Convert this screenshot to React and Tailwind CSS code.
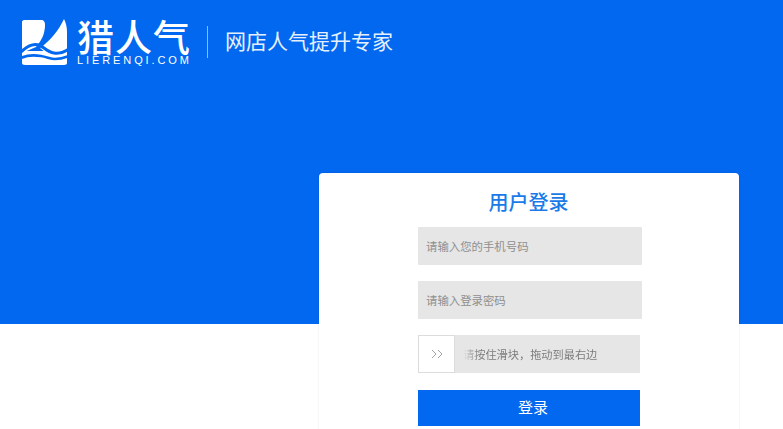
import { useState } from 'react';

const cjk = { fontFamily: '"Noto Sans CJK SC", "Liberation Sans", sans-serif' };

function LogoMark() {
  return (
    <svg width="46" height="47" viewBox="0 0 46 47" fill="#fff" aria-hidden className="shrink-0">
      <path d="M2 1H19C22 1 23 3 23 6C23 14 20 21 14 28L0 34V3C0 2 1 1 2 1Z" />
      <path d="M42 0C44 4 45 8 45 13V34H24L18 29C28 22 37 11 42 0Z" />
      <path d="M0 32H45V44C45 45 44 46 42 46H3C1 46 0 45 0 44Z" />
      <path d="M-1 33C5 27 11 24 17 26C22 28 25 33 32 34C37 35 41 34 47 30" fill="none" stroke="#0268f0" strokeWidth="3" />
      <path d="M-1 39C5 36 13 36 19 37C25 38 29 40 33 40C38 40 42 39 47 37" fill="none" stroke="#0268f0" strokeWidth="2.6" />
    </svg>
  );
}

function Field({ placeholder, type = 'text' }) {
  const [value, setValue] = useState('');
  return (
    <input
      type={type}
      value={value}
      onChange={(e) => setValue(e.target.value)}
      placeholder={placeholder}
      className="h-[38px] w-[224px] rounded-[1px] bg-[#e6e6e6] px-[8px] text-[11.4px] text-[#333] outline-none placeholder:text-[#8f8f8f]"
      style={cjk}
    />
  );
}

export default function App() {
  return (
    <div className="h-[429px] w-full overflow-hidden bg-white" style={cjk}>
      <div className="h-[324px] bg-[#0268f0]">
        <header className="flex h-[173px] items-start pl-[22px] pt-[19px] text-white">
          <LogoMark />
          <div className="ml-[9px] flex w-[114px] flex-col">
            <span className="h-[35px] text-[37px] font-medium leading-[35px] tracking-[1px] whitespace-nowrap">猎人气</span>
            <span
              className="mt-[1px] text-[11px] leading-[11px] tracking-[2.9px] whitespace-nowrap"
              style={{ fontFamily: '"Liberation Sans", sans-serif' }}
            >
              LIERENQI.COM
            </span>
          </div>
          <div className="ml-[16px] mt-[7px] h-[32px] w-px bg-[#8fbcf7]" />
          <span className="ml-[17px] mt-[6px] text-[21px] leading-[30px] text-[#e6f0fd] whitespace-nowrap">网店人气提升专家</span>
        </header>

        <main className="ml-auto mr-[44px] flex h-[300px] w-[420px] flex-col rounded-t-[4px] bg-white pl-[99px] shadow-[0_0_2px_rgba(0,0,0,0.12)]">
          <h1 className="mt-[15px] h-[27px] w-[224px] pr-[3px] text-center text-[20px] font-medium leading-[27px] text-[#1a7be8]">用户登录</h1>
          <div className="mt-[12px] flex flex-col gap-[16px]">
            <Field placeholder="请输入您的手机号码" />
            <Field placeholder="请输入登录密码" type="password" />
            <div className="flex h-[38px] w-[222px] items-center bg-[#e6e6e6]">
              <div className="flex h-[38px] w-[37px] shrink-0 items-center justify-center border border-[#dcdcdc] bg-white">
                <svg width="12" height="10" viewBox="0 0 12 10" fill="none" stroke="#a3a3a3" strokeWidth="1" aria-hidden>
                  <path d="M1 1l4 4-4 4M7 1l4 4-4 4" />
                </svg>
              </div>
              <span className="ml-[8px] bg-gradient-to-r from-[#e6e6e6] via-[#777] via-[12%] to-[#777] bg-clip-text text-[11.2px] text-transparent whitespace-nowrap">
                请按住滑块，拖动到最右边
              </span>
            </div>
          </div>
          <button
            type="button"
            className="mt-[17px] h-[36px] w-[222px] pl-[8px] pb-[2px] text-[15px] text-white bg-[#0268f0]"
          >
            登录
          </button>
        </main>
      </div>
    </div>
  );
}
